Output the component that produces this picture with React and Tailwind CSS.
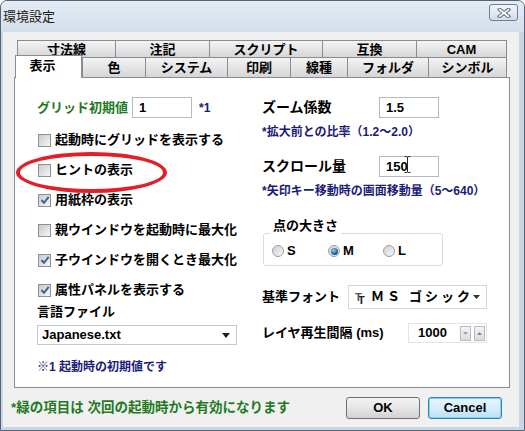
import React from "react";

function Check({ checked }) {
  return (
    <span className="w-[13px] h-[13px] shrink-0 border border-[#8e8f8f] bg-linear-to-br from-[#c6c9ce] to-[#f7f7f7] flex items-center justify-center">
      {checked && (
        <svg width="10" height="10" viewBox="0 0 10 10">
          <path d="M1.5 5 L4 7.8 L8.7 1.8" fill="none" stroke="#3f5c94" strokeWidth="1.9" />
        </svg>
      )}
    </span>
  );
}

function Radio({ on }) {
  return (
    <span className="w-[12px] h-[12px] shrink-0 rounded-full border border-[#9c9c9c] bg-linear-to-br from-[#cdd0d4] to-[#f8f8f8] flex items-center justify-center">
      {on && <span className="w-[7px] h-[7px] rounded-full bg-[radial-gradient(circle_at_40%_35%,#8fd3f7,#1a5d96_60%,#0c3563)]" />}
    </span>
  );
}

function Input({ children, w }) {
  return (
    <div className={`${w} h-[21px] shrink-0 bg-white border border-[#b5b9c0] flex items-center px-[6px] text-[13px] font-bold text-black relative`}>
      {children}
    </div>
  );
}

const row1 = [
  ["寸法線", "w-[98px]"],
  ["注記", "w-[94px]"],
  ["スクリプト", "w-[113px]"],
  ["互換", "w-[94px]"],
  ["CAM", "w-[91px] border-r"],
];
const row2 = [
  ["色", "w-[63px]"],
  ["システム", "w-[82px]"],
  ["印刷", "w-[63px]"],
  ["線種", "w-[57px]"],
  ["フォルダ", "w-[81px]"],
  ["シンボル", "w-[79px] border-r"],
];

const checks = [
  ["起動時にグリッドを表示する", false],
  ["ヒントの表示", false],
  ["用紙枠の表示", true],
  ["親ウインドウを起動時に最大化", false],
  ["子ウインドウを開くとき最大化", true],
  ["属性パネルを表示する", true],
];

export default function App() {
  return (
    <div className="w-[525px] h-[431px] flex flex-col bg-[#c9d6e4] border border-[#56647a] rounded-t-[7px] overflow-hidden font-['Liberation_Sans','Noto_Sans_CJK_JP',sans-serif] text-black">
      {/* title bar */}
      <div className="h-[31px] shrink-0 flex items-center justify-between pl-[2px] pr-[6px] bg-linear-to-b from-[#e4ebf3] to-[#d5dfea]">
        <span className="text-[13px] text-[#1b1b1b]">環境設定</span>
        <div className="w-[29px] h-[17px] -mt-[8px] rounded-[3px] border border-[#6f8096] bg-linear-to-b from-[#f1f5f9] to-[#d3dde8] flex items-center justify-center">
          <svg width="14" height="10" viewBox="0 0 14 10">
            <path d="M2.5 1.5 L11.5 8.5 M11.5 1.5 L2.5 8.5" stroke="#5e6b7c" strokeWidth="3.6" strokeLinecap="square" />
            <path d="M2.5 1.5 L11.5 8.5 M11.5 1.5 L2.5 8.5" stroke="#ffffff" strokeWidth="1.6" strokeLinecap="square" />
          </svg>
        </div>
      </div>

      {/* client */}
      <div className="flex-1 ml-[2px] mr-[5px] mb-[3px] bg-[#f0f0f0] flex flex-col">
        <div className="mt-[8px] ml-[11px] w-[496px] flex flex-col">
          {/* tab row 1 */}
          <div className="flex ml-[3px] h-[17px]">
            {row1.map(([t, c]) => (
              <div
                key={t}
                className={`${c} h-[17px] border-t border-l border-[#898c95] bg-linear-to-b from-[#f4f4f4] to-[#d6d6d6] flex items-center justify-center text-[13px] font-bold leading-none pt-[1px]`}
              >
                {t}
              </div>
            ))}
          </div>
          {/* tab row 2 */}
          <div className="flex ml-[1px] h-[20px] items-end">
            <div className="w-[67px] h-[23px] -mb-[1px] relative z-10 bg-white border-t border-l border-r border-[#898c95] flex justify-center pt-[3px] pr-[12px] text-[13px] font-bold leading-none">
              表示
            </div>
            {row2.map(([t, c]) => (
              <div
                key={t}
                className={`${c} h-[20px] border-t border-l border-[#898c95] bg-linear-to-b from-[#f4f4f4] to-[#d6d6d6] flex items-center justify-center text-[13px] font-bold leading-none`}
              >
                {t}
              </div>
            ))}
          </div>

          {/* panel */}
          <div className="w-[496px] h-[311px] border border-[#898c95] bg-white relative flex">
            {/* left column */}
            <div className="w-[247px] pl-[22px] pt-[19px] flex flex-col">
              <div className="h-[21px] flex items-center">
                <span className="w-[95px] text-[13px] font-bold text-[#1f7a1f]">グリッド初期値</span>
                <Input w="w-[60px]">1</Input>
                <span className="ml-[7px] text-[12px] font-bold text-[#1b1b78]">*1</span>
              </div>
              <div className="mt-[7px] flex flex-col">
                {checks.map(([t, c]) => (
                  <div key={t} className="h-[30px] flex items-center gap-[4px] pl-[1px]">
                    <Check checked={c} />
                    <span className="text-[13px] font-bold whitespace-nowrap">{t}</span>
                  </div>
                ))}
              </div>
              <div className="h-[16px] -mt-[1px] flex items-center text-[13px] font-bold">言語ファイル</div>
              <div className="mt-[5px] w-[200px] h-[20px] bg-white border border-[#c4c8ce] flex items-center justify-between pl-[4px] pr-[6px]">
                <span className="text-[13px] font-bold">Japanese.txt</span>
                <svg width="8" height="5" viewBox="0 0 8 5"><path d="M0 0 H8 L4 5 Z" fill="#222" /></svg>
              </div>
              <div className="mt-[14px] h-[16px] flex items-center text-[12px] font-bold text-[#1b1b78] whitespace-nowrap">
                ※1 起動時の初期値です
              </div>
            </div>

            {/* right column */}
            <div className="flex-1 pt-[19px] flex flex-col">
              <div className="h-[21px] flex items-center">
                <span className="w-[117px] text-[14px] font-bold">ズーム係数</span>
                <Input w="w-[60px]">1.5</Input>
              </div>
              <div className="mt-[6px] h-[16px] flex items-center text-[12px] font-bold text-[#1b1b78] whitespace-nowrap">
                *拡大前との比率（1.2～2.0）
              </div>
              <div className="mt-[16px] h-[21px] flex items-center">
                <span className="w-[117px] text-[14px] font-bold">スクロール量</span>
                <Input w="w-[60px]">
                  150
                  <svg className="absolute left-[24px] top-[-1px]" width="7" height="17" viewBox="0 0 7 17">
                    <path d="M0.5 0.5 H2.5 Q3.5 0.5 3.5 2 V15 Q3.5 16.5 2.5 16.5 H0.5 M6.5 0.5 H4.5 Q3.5 0.5 3.5 2 M3.5 15 Q3.5 16.5 4.5 16.5 H6.5" fill="none" stroke="#222" strokeWidth="1" />
                  </svg>
                </Input>
              </div>
              <div className="mt-[6px] h-[16px] flex items-center text-[12px] font-bold text-[#1b1b78] whitespace-nowrap">
                *矢印キー移動時の画面移動量（5～640）
              </div>

              {/* group box */}
              <div className="mt-[34px] ml-[1px] w-[180px] h-[33px] border border-[#d5dde3] rounded-[3px] relative">
                <span className="absolute left-[6px] top-[-16px] bg-white px-[3px] text-[13px] font-bold leading-[16px]">点の大きさ</span>
                <div className="flex items-center h-full pt-[3px] pl-[8px]">
                  <div className="w-[56px] flex items-center gap-[3px]"><Radio /><span className="text-[13px] font-bold">S</span></div>
                  <div className="w-[55px] flex items-center gap-[3px]"><Radio on /><span className="text-[13px] font-bold">M</span></div>
                  <div className="flex items-center gap-[3px]"><Radio /><span className="text-[13px] font-bold">L</span></div>
                </div>
              </div>

              <div className="mt-[19px] h-[24px] flex items-center">
                <span className="w-[86px] text-[13px] font-bold whitespace-nowrap">基準フォント</span>
                <div className="w-[139px] h-[24px] bg-white border border-[#d3d6da] flex items-center pl-[6px] pr-[6px]">
                  <span className="w-[12px] text-[11px] font-bold leading-none text-[#555] [text-shadow:3px_3px_0_#222]">T</span>
                  <span className="ml-[4px] text-[13px] font-bold tracking-[3px]">ＭＳ</span>
                  <span className="ml-[6px] text-[13px] font-bold tracking-[3px]">ゴシック</span>
                  <svg className="ml-auto" width="7" height="4" viewBox="0 0 7 4"><path d="M0 0 H7 L3.5 4 Z" fill="#333" /></svg>
                </div>
              </div>

              <div className="mt-[14px] h-[20px] flex items-center">
                <span className="w-[146px] text-[13px] font-bold whitespace-nowrap">レイヤ再生間隔 (ms)</span>
                <div className="w-[79px] h-[20px] bg-white border border-[#e2e4e7] flex items-center pl-[9px] pr-[1px]">
                  <span className="text-[13px] font-bold">1000</span>
                  <div className="ml-auto flex gap-[3px]">
                    <div className="w-[11px] h-[15px] border border-[#b8bcc2] bg-linear-to-b from-[#f4f4f4] to-[#dcdcdc] flex items-center justify-center">
                      <svg width="5" height="3" viewBox="0 0 5 3"><path d="M0 0 H5 L2.5 3 Z" fill="#9aa3ae" /></svg>
                    </div>
                    <div className="w-[11px] h-[15px] border border-[#b8bcc2] bg-linear-to-b from-[#f4f4f4] to-[#dcdcdc] flex items-center justify-center">
                      <svg width="5" height="3" viewBox="0 0 5 3"><path d="M0 3 H5 L2.5 0 Z" fill="#7d8895" /></svg>
                    </div>
                  </div>
                </div>
              </div>
            </div>

            {/* red ellipse annotation */}
            <div className="absolute left-[1px] top-[74px] w-[151px] h-[41px] border-[4px] border-[#e21f27] rounded-[50%] pointer-events-none" />
          </div>
        </div>

        {/* footer */}
        <div className="mt-[9px] h-[22px] flex items-center pl-[8px] pr-[17px]">
          <span className="text-[13.5px] font-bold text-[#1f7a1f] whitespace-nowrap">*緑の項目は 次回の起動時から有効になります</span>
          <div className="ml-auto flex gap-[8px]">
            <div className="w-[74px] h-[22px] rounded-[3px] border border-[#707070] bg-linear-to-b from-[#f3f3f3] via-[#e6e6e6] to-[#d2d2d2] flex items-center justify-center text-[13px] font-bold">
              OK
            </div>
            <div className="w-[74px] h-[22px] rounded-[3px] border border-[#3c7fb1] shadow-[inset_0_0_0_1px_#7fd0f5] bg-linear-to-b from-[#e8f5fc] via-[#d6eefb] to-[#b9e0f5] flex items-center justify-center text-[13px] font-bold">
              Cancel
            </div>
          </div>
        </div>
      </div>
    </div>
  );
}
